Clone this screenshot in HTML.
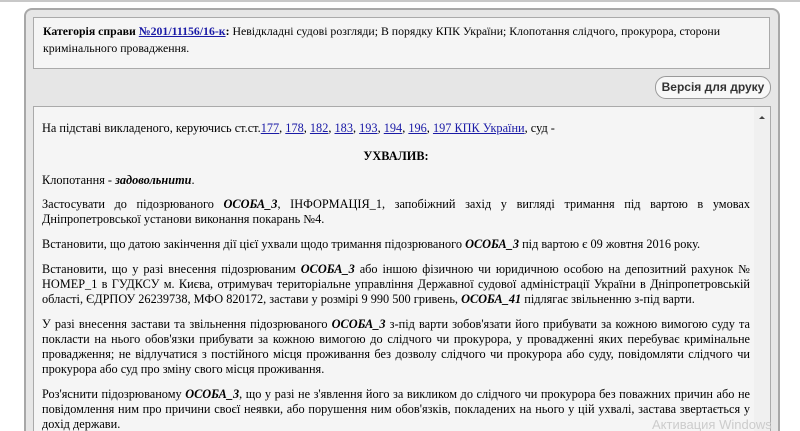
<!DOCTYPE html>
<html style="height:431px;overflow:hidden"><head><meta charset="utf-8"><style>
body{margin:0;width:800px;height:431px;overflow:hidden;position:relative;background:#fff;font-family:"Liberation Serif",serif;font-size:12.3px;color:#000}
.top{position:absolute;left:0;top:0;width:800px;height:2px;background:#c8c8c8}
.outer{position:absolute;left:24px;top:8px;width:752px;height:440px;background:#e6e6e6;border:2px solid #a8a8a8;border-radius:8px}
.cat{position:absolute;left:33px;top:17px;width:735px;height:50px;background:#f5f5f5;border:1px solid #aaa;}
.cat p{margin:5px 9px;line-height:17px;font-size:11.8px}
a{color:#1a1aa6;text-decoration:underline}
.btn{position:absolute;left:655px;top:76px;width:114px;height:21px;border:1px solid #999;border-radius:11px;background:#f7f7f7;font-family:"Liberation Sans",sans-serif;font-size:12px;font-weight:bold;color:#333;text-align:center;line-height:21px}
.cont{position:absolute;left:33px;top:106px;width:736px;height:340px;background:#f5f5f5;border:1px solid #aaa}
.sb{position:absolute;right:0;top:0;width:16px;height:100%;background:#f0f0f0}
.sb:after{content:"";position:absolute;left:5px;top:9px;border-left:3px solid transparent;border-right:3px solid transparent;border-bottom:3px solid #444}
.txt{position:absolute;left:8px;top:14px;width:708px;text-align:justify;line-height:15px}
.txt p{margin:0 0 10px}
.wm{position:absolute;left:652px;top:417px;font-family:"Liberation Sans",sans-serif;font-size:13px;color:#ccc}
</style></head><body>
<div class="top"></div>
<div class="outer"></div>
<div class="cat"><p><b>Категорія справи <a>№201/11156/16-к</a>:</b> Невідкладні судові розгляди; В порядку КПК України; Клопотання слідчого, прокурора, сторони кримінального провадження.</p></div>
<div class="btn">Версія для друку</div>
<div class="cont"><div class="sb"></div>
<div class="txt">
<p style="text-align:left;margin-bottom:13px">На підставі викладеного, керуючись ст.ст.<a>177</a>, <a>178</a>, <a>182</a>, <a>183</a>, <a>193</a>, <a>194</a>, <a>196</a>, <a>197 КПК України</a>, суд -</p>
<p style="text-align:center;margin-bottom:9px"><b>УХВАЛИВ:</b></p>
<p style="margin-bottom:9px">Клопотання - <b><i>задовольнити</i></b>.</p>
<p>Застосувати до підозрюваного <b><i>ОСОБА_3</i></b>, ІНФОРМАЦІЯ_1, запобіжний захід у вигляді тримання під вартою в умовах Дніпропетровської установи виконання покарань №4.</p>
<p>Встановити, що датою закінчення дії цієї ухвали щодо тримання підозрюваного <b><i>ОСОБА_3</i></b> під вартою є 09 жовтня 2016 року.</p>
<p>Встановити, що у разі внесення підозрюваним <b><i>ОСОБА_3</i></b> або іншою фізичною чи юридичною особою на депозитний рахунок № НОМЕР_1 в ГУДКСУ м. Києва, отримувач територіальне управління Державної судової адміністрації України в Дніпропетровській області, ЄДРПОУ 26239738, МФО 820172, застави у розмірі 9 990 500 гривень, <b><i>ОСОБА_41</i></b> підлягає звільненню з-під варти.</p>
<p>У разі внесення застави та звільнення підозрюваного <b><i>ОСОБА_3</i></b> з-під варти зобов'язати його прибувати за кожною вимогою суду та покласти на нього обов'язки прибувати за кожною вимогою до слідчого чи прокурора, у провадженні яких перебуває кримінальне провадження; не відлучатися з постійного місця проживання без дозволу слідчого чи прокурора або суду, повідомляти слідчого чи прокурора або суд про зміну свого місця проживання.</p>
<p>Роз'яснити підозрюваному <b><i>ОСОБА_3</i></b>, що у разі не з'явлення його за викликом до слідчого чи прокурора без поважних причин або не повідомлення ним про причини своєї неявки, або порушення ним обов'язків, покладених на нього у цій ухвалі, застава звертається у дохід держави.</p>
</div></div>
<div class="wm">Активация Windows</div>
</body></html>
